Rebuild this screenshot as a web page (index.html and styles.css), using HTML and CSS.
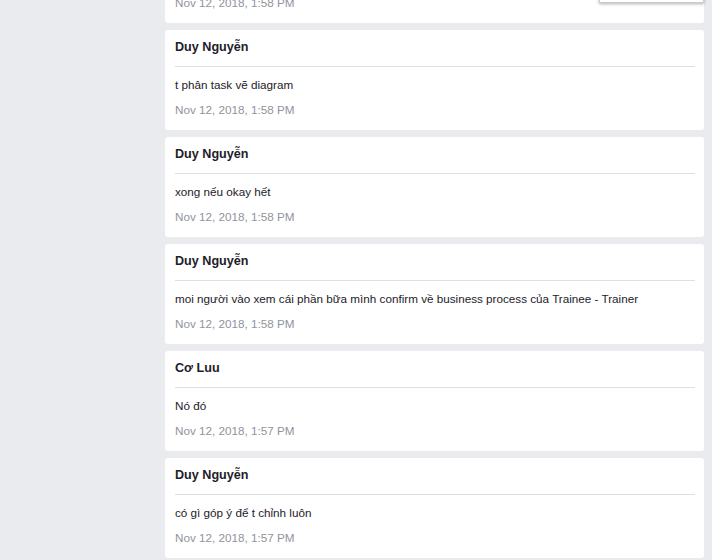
FILE: index.html
```html
<!DOCTYPE html>
<html>
<head>
<meta charset="utf-8">
<link rel="stylesheet" href="styles.css">
</head>
<body>
<div class="popup"></div>
<div class="feed">
  <div class="card">
    <div class="name">Duy Nguyễn</div>
    <div class="msg">ok</div>
    <div class="date">Nov 12, 2018, 1:58 PM</div>
  </div>
  <div class="card">
    <div class="name">Duy Nguyễn</div>
    <div class="msg">t phân task vẽ diagram</div>
    <div class="date">Nov 12, 2018, 1:58 PM</div>
  </div>
  <div class="card">
    <div class="name">Duy Nguyễn</div>
    <div class="msg">xong nếu okay hết</div>
    <div class="date">Nov 12, 2018, 1:58 PM</div>
  </div>
  <div class="card">
    <div class="name">Duy Nguyễn</div>
    <div class="msg">moi người vào xem cái phần bữa mình confirm về business process của Trainee - Trainer</div>
    <div class="date">Nov 12, 2018, 1:58 PM</div>
  </div>
  <div class="card">
    <div class="name">Cơ Luu</div>
    <div class="msg">Nó đó</div>
    <div class="date">Nov 12, 2018, 1:57 PM</div>
  </div>
  <div class="card">
    <div class="name">Duy Nguyễn</div>
    <div class="msg">có gì góp ý để t chỉnh luôn</div>
    <div class="date">Nov 12, 2018, 1:57 PM</div>
  </div>
</div>
</body>
</html>
```
FILE: styles.css
```css
html, body {
  margin: 0;
  padding: 0;
  background: #e9ebee;
  overflow: hidden;
  height: 560px;
}
body {
  font-family: "Liberation Sans", Arial, sans-serif;
  color: #1d2129;
  position: relative;
}
.feed {
  display: flex;
  flex-direction: column;
  gap: 7px;
  padding: 0 8px 0 165px;
  margin-top: -77px;
}
.card {
  background: #fff;
  border-radius: 3px;
  padding: 0 9px 13px 10px;
  height: 100px;
  box-sizing: border-box;
}
.name {
  font-weight: bold;
  font-size: 12.6px;
  line-height: 15px;
  padding-top: 10px;
  padding-bottom: 11px;
  border-bottom: 1px solid #dddfe2;
}
.msg {
  font-size: 11.7px;
  line-height: 14px;
  margin-top: 11px;
}
.date {
  font-size: 11.7px;
  line-height: 14px;
  margin-top: 11px;
  color: #90949c;
}
.popup {
  position: absolute;
  top: -12px;
  right: 8px;
  width: 103px;
  height: 13px;
  background: #fff;
  border: 1px solid #c9ccd1;
  box-shadow: 0 1px 3px rgba(0, 0, 0, 0.3);
  z-index: 2;
}
```
